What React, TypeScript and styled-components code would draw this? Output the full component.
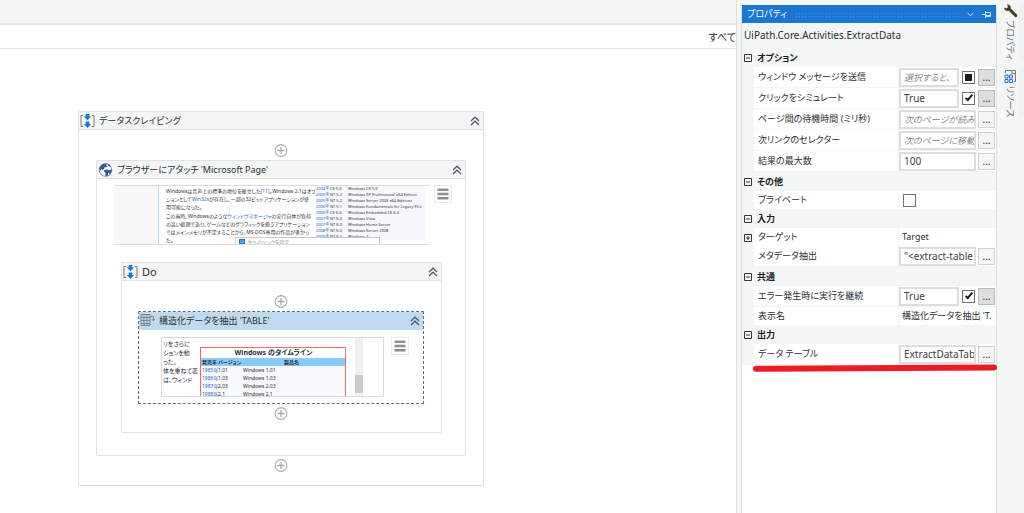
import React from "react";
import styled, { createGlobalStyle, css } from "styled-components";

const ui = `"Noto Sans", "Noto Sans CJK JP", sans-serif`;

const Global = createGlobalStyle`
  *, *::before, *::after { box-sizing: border-box; }
  body {
    margin: 0;
    background: #f4f6f5;
    color: #2b2f33;
    font-family: ${ui};
    font-size: 10px;
    font-feature-settings: "palt";
  }
  button, input { font: inherit; color: inherit; font-feature-settings: inherit; margin: 0; }
`;

/* ---------- frame ---------- */

const Shell = styled.div`
  display: flex;
  min-height: 100vh;
`;

const Designer = styled.main`
  flex: 1;
  min-width: 0;
  display: flex;
  flex-direction: column;
  border-right: 1px solid #dcdfdf;
`;

const Ribbon = styled.div`
  height: 25px;
  border-bottom: 2px solid #e3e5e7;
`;

const Breadcrumb = styled.nav`
  height: 24px;
  display: flex;
  align-items: center;
  justify-content: flex-end;
  background: #fff;
  border-bottom: 1px solid #e0e2e3;
  overflow: hidden;
`;

const PlainButton = styled.button`
  display: inline-flex;
  align-items: center;
  justify-content: center;
  padding: 0;
  border: 0;
  background: none;
  line-height: 16px;
`;

const Canvas = styled.div`
  flex: 1;
  display: flex;
  align-items: flex-start;
  padding: 62px 0 24px 78px;
  background: #fff;
`;

/* ---------- activities ---------- */

const Card = styled.section<{ $selected?: boolean }>`
  flex: none;
  background: #fff;
  border: 1px solid #dfe1e2;
  border-radius: 1px;
  ${(p) => p.$selected && css`border: 1px dashed #4f7187;`}
`;

const CardHeader = styled.header<{ $selected?: boolean }>`
  height: 18px;
  display: flex;
  align-items: center;
  gap: 4px;
  padding: 0 3px 0 1px;
  background: ${(p) => (p.$selected ? "#bfdaef" : "#f4f6f5")};
  border-bottom: 1px solid ${(p) => (p.$selected ? "#bfdaef" : "#dfe1e2")};
`;

const CardTitle = styled.h2<{ $size?: number }>`
  flex: 1;
  margin: 0;
  font-size: ${(p) => p.$size ?? 9}px;
  font-weight: 400;
  line-height: 16px;
  white-space: nowrap;
`;

const CardBody = styled.div<{ $pad: string; $gap?: number }>`
  display: flex;
  flex-direction: column;
  align-items: center;
  gap: ${(p) => p.$gap ?? 3}px;
  padding: ${(p) => p.$pad};
`;

const Preview = styled.div<{ $wide?: boolean }>`
  align-self: stretch;
  display: flex;
  align-items: flex-start;
  justify-content: space-between;
  gap: 7px;
  ${(p) => p.$wide && css`gap: 4px; margin: 0 -10px 0 -7px;`}
`;

const MenuButton = styled(PlainButton)`
  width: 18px;
  height: 18px;
  flex: none;
  border: 1px solid #e6e8f2;
  background: #fff;
`;

const Collapse = () => (
  <PlainButton aria-label="折りたたむ">
    <svg width="10" height="10" viewBox="0 0 10 10" fill="none" stroke="#4d5870" strokeWidth="1.2">
      <path d="M1 5 5 1.2 9 5M1 9 5 5.2 9 9" />
    </svg>
  </PlainButton>
);

const AddActivity = () => (
  <PlainButton aria-label="アクティビティを追加">
    <svg width="14" height="13" viewBox="0 0 14 13" fill="none" stroke="#a9abad" strokeWidth="1.1">
      <circle cx="7" cy="6.5" r="5.9" />
      <path d="M7 3v7M3.5 6.5h7" strokeWidth="1.3" />
    </svg>
  </PlainButton>
);

const Menu = () => (
  <MenuButton aria-label="オプション">
    <svg width="12" height="12" viewBox="0 0 12 12" fill="#8f8f8f">
      <path d="M.5.5h11V3H.5zM.5 4.800h11v2.500H.5zM.5 9h11v2.500H.5z" />
    </svg>
  </MenuButton>
);

const SequenceIcon = () => (
  <svg width="15" height="14" viewBox="0 0 15 14">
    <path d="M3 1.500H1v11h2M12 1.500h2v11h-2" fill="none" stroke="#7a7d80" />
    <path d="M5.700 0h3.600v2.500H11L7.500 6.200 4 2.500h1.700zM5.700 7.500h3.600V10H11l-3.500 4L4 10h1.700z" fill="#1878d6" />
  </svg>
);

const GlobeIcon = () => (
  <svg width="15" height="14" viewBox="0 0 15 14">
    <circle cx="7.5" cy="7" r="6.3" fill="#fff" stroke="#7088b8" strokeWidth=".9" />
    <path
      d="M1.300 6.500C1.300 3.500 3.500 1.200 6 .7l3 .1L8 2l1.500 1L8 4.500 6.500 4.200 6 6 4.500 7 3.500 6.200 2.500 7.500zM9.500 1l2 .8 1.500 2-1.500-.3L10 2.500zM5.500 7.500 8 6.500l3 .5 2.800-.5c0 2-1 3.800-2.300 4.800L10.500 9.500 9.500 13l-2 .3L7.500 10z"
      fill="#345a9c"
    />
  </svg>
);

const TableIcon = () => (
  <svg width="15" height="13" viewBox="0 0 15 13" fill="none" stroke="#7c858d">
    <path d="M1 .5h9v11H1zM1 3.500h9M1 6.500h9M1 9.500h9M4 .5v11M7 .5v11M10 2.500h3.500v4M11.800 5l1.700 2 1.300-2" />
  </svg>
);

/* ---------- captured page previews ---------- */

const Shot = styled.div<{ $width: number; $framed?: boolean }>`
  width: ${(p) => p.$width}px;
  height: 60px;
  flex: none;
  display: flex;
  position: relative;
  overflow: hidden;
  background: #fff;
  border: solid #d9dcde;
  border-width: ${(p) => (p.$framed ? "1px" : "1px 0")};
`;

const ShotMargin = styled.div`
  width: 45px;
  flex: none;
  background: #f7f7f8;
  border-right: 1px solid #b9dcf5;
`;

const Article = styled.div`
  flex: 1;
  min-width: 0;
  padding: 1px 0 0 7px;
  font-size: 5px;
  line-height: 8px;
  white-space: nowrap;
  color: #333;
`;

const Paragraph = styled.p`
  margin: 0 0 1px;
`;

const ShotLink = styled.a`
  color: #2f67c8;
  text-decoration: none;
`;

const Releases = styled.table`
  flex: none;
  width: 110px;
  margin-right: 5px;
  align-self: flex-start;
  table-layout: fixed;
  border-collapse: collapse;
  background: #f6f7fa;
  font-size: 4px;
  line-height: 6px;
  white-space: nowrap;
  color: #333;
  td { padding: 0 0 0 1px; height: 6px; }
`;

const LinkHint = styled.div`
  position: absolute;
  left: 121px;
  top: 51px;
  width: 145px;
  height: 12px;
  display: flex;
  align-items: center;
  gap: 2px;
  padding: 0 3px 2px;
  border: 1px solid #c9c9c9;
  background: #fff;
  font-size: 5px;
  line-height: 8px;
  color: #999;
`;

const HintBadge = styled.span`
  width: 6px;
  height: 6px;
  background: #1b76d4;
  color: #fff;
  font-size: 4px;
  line-height: 6px;
  text-align: center;
`;

const SideText = styled.div`
  width: 38px;
  flex: none;
  padding: 2px 0 0 1px;
  font-size: 6px;
  line-height: 9px;
  white-space: nowrap;
  overflow: hidden;
`;

const Timeline = styled.table`
  width: 146px;
  flex: none;
  margin-top: 9px;
  align-self: flex-start;
  table-layout: fixed;
  border-spacing: 0;
  border: solid #fb6467;
  border-width: 1px 1px 0;
  background: #f8f9fb;
  font-size: 5px;
  line-height: 8px;
  white-space: nowrap;
  th, td { padding: 0 0 0 1px; text-align: left; height: 8px; }
`;

const TimelineTitle = styled.th`
  && {
    height: 10px;
    font-size: 7px;
    line-height: 10px;
    text-align: center;
    background: #fff;
  }
`;

const TimelineHead = styled.tr`
  background: #87cdfb;
  th:last-child { padding-left: 42px; }
`;

const ScrollTrack = styled.div`
  width: 8px;
  margin-left: 9px;
  padding-top: 37px;
  background: #f0f0f0;
  &::before { content: ""; display: block; height: 18px; background: #cbcbcb; }
`;

const releases = [
  ["2004年", "CE 5.0", "Windows CE 5.0"],
  ["2005年", "NT 5.2", "Windows XP Professional x64 Edition"],
  ["2005年", "NT 5.2", "Windows Server 2003 x64 Editions"],
  ["2006年", "NT 5.1", "Windows Fundamentals for Legacy PCs"],
  ["2006年", "CE 6.0", "Windows Embedded CE 6.0"],
  ["2007年", "NT 6.0", "Windows Vista"],
  ["2007年", "NT 6.0", "Windows Home Server"],
  ["2008年", "NT 6.0", "Windows Server 2008"],
  ["2009年", "NT 6.1", "Windows 7"],
];

const timeline = [
  ["1985年", "1.01", "Windows 1.01"],
  ["1986年", "1.03", "Windows 1.03"],
  ["1987年", "2.03", "Windows 2.03"],
  ["1988年", "2.1", "Windows 2.1"],
];

const PagePreview = () => (
  <Shot $width={316}>
    <ShotMargin />
    <Article>
      <Paragraph>
        Windowsは音声上の標準の地位を確立した<ShotLink href="#">[11]</ShotLink>。Windows 2.1はオプ<br />
        ションとして<ShotLink href="#">Win32s</ShotLink>が存在し、一部の32ビットアプリケーションが使<br />
        用可能になった。
      </Paragraph>
      <Paragraph>
        この当時、Windowsのような<ShotLink href="#">ウィンドウマネージャ</ShotLink>の実行自体が負荷<br />
        の高い処理であり、ゲームなどのグラフィックを扱うアプリケーション<br />
        ではメインメモリが不足することから、MS-DOS専用の作品が多かっ<br />
        た。
      </Paragraph>
    </Article>
    <Releases>
      <colgroup>
        <col width="14" /><col width="18" /><col />
      </colgroup>
      <tbody>
        {releases.map(([year, version, name]) => (
          <tr key={name}>
            <td><ShotLink href="#">{year}</ShotLink></td>
            <td>{version}</td>
            <td>{name}</td>
          </tr>
        ))}
      </tbody>
    </Releases>
    <LinkHint><HintBadge>Ui</HintBadge>次へのリンクを指定</LinkHint>
  </Shot>
);

const TablePreview = () => (
  <Shot $width={223} $framed>
    <SideText>
      <ShotLink href="#">リ</ShotLink>をさらに<br />ションを動<br />った。<br />体を重ねて表<br />は、ウィンド
    </SideText>
    <Timeline>
      <colgroup>
        <col width="16" /><col width="25" /><col />
      </colgroup>
      <thead>
        <tr><TimelineTitle colSpan={3}>Windows のタイムライン</TimelineTitle></tr>
        <TimelineHead><th>発売年</th><th>バージョン</th><th>製品名</th></TimelineHead>
      </thead>
      <tbody>
        {timeline.map(([year, version, name]) => (
          <tr key={name}>
            <td><ShotLink href="#">{year}</ShotLink></td>
            <td>{version}</td>
            <td>{name}</td>
          </tr>
        ))}
      </tbody>
    </Timeline>
    <ScrollTrack />
  </Shot>
);

/* ---------- properties panel ---------- */

const Panel = styled.aside`
  width: 256px;
  flex: none;
  display: flex;
  flex-direction: column;
  margin: 5px 0 0 4px;
  border: solid #dfe1e2;
  border-width: 0 1px;
  background: #fff;
`;

const PanelHeader = styled.header`
  height: 18px;
  display: flex;
  align-items: center;
  gap: 8px;
  padding: 0 5px;
  background: #1b76d4;
  color: #fff;
`;

const PanelTitle = styled.h1`
  margin: 0;
  font-size: 9px;
  font-weight: 400;
  line-height: 16px;
`;

const Grip = styled.div`
  flex: 1;
  height: 5px;
  background: radial-gradient(circle, #4a94de 0 0.7px, transparent 1px) 0 0 / 3px 3px;
`;

const TypeName = styled.div`
  height: 25px;
  padding-left: 2px;
  background: #f4f6f5;
  line-height: 25px;
`;

const Grid = styled.div`
  background: #f4f6f5;
`;

const Category = styled.h3`
  height: 19px;
  display: flex;
  align-items: center;
  gap: 5px;
  margin: 0;
  padding-left: 2px;
  font-size: 9px;
  font-weight: 700;
  line-height: 16px;
  color: #1e2124;
`;

const Expander = styled(PlainButton)`
  width: 8px;
  height: 8px;
`;

const Row = styled.div<{ $short?: boolean }>`
  display: grid;
  grid-template-columns: 12px 144px minmax(0, 1fr);
  align-items: center;
  height: ${(p) => (p.$short ? 18 : 21)}px;
`;

const Gutter = styled.div`
  padding-left: 2px;
  display: flex;
`;

const Name = styled.label`
  align-self: stretch;
  display: flex;
  align-items: center;
  padding-left: 4px;
  background: #fff;
  border-bottom: 1px solid #f4f6f5;
  font-size: 9px;
  line-height: 18px;
  white-space: nowrap;
`;

const Value = styled.div`
  align-self: stretch;
  min-width: 0;
  display: flex;
  align-items: center;
  gap: 2px;
  padding-right: 1px;
  background: #fff;
  border-left: 1px solid #f4f6f5;
  border-bottom: 1px solid #f4f6f5;
`;

const PlainValue = styled.span`
  padding-left: 3px;
  font-size: 9px;
  line-height: 18px;
  white-space: nowrap;
`;

const Field = styled.input`
  flex: 1;
  width: 0;
  min-width: 0;
  height: 19px;
  padding: 0 0 0 3px;
  border: 2px solid #dcdddf;
  background: #fff;
  color: #3c4146;
  outline: 0;
  &::placeholder { color: #85888b; font-size: 9px; font-style: italic; opacity: 1; }
`;

const Check = styled.input<{ $mixed?: boolean; $alone?: boolean }>`
  appearance: none;
  width: 13px;
  height: 13px;
  flex: none;
  display: grid;
  place-items: center;
  border: 1px solid #6f7275;
  background: #fff;
  && { margin: 0 1px 0 ${(p) => (p.$alone ? 4 : 1)}px; }
  &:checked::after {
    content: "";
    width: 4px;
    height: 8px;
    margin-bottom: 2px;
    border: solid #1d1d1d;
    border-width: 0 2px 2px 0;
    transform: rotate(40deg);
  }
  ${(p) => p.$mixed && css`&::after { content: ""; width: 7px; height: 7px; background: #1d1d1d; }`}
`;

const More = styled.button<{ $dark?: boolean }>`
  width: 17px;
  height: 17px;
  flex: none;
  padding: 0;
  border: 1px solid ${(p) => (p.$dark ? "#b9b9b9" : "#cfd1d2")};
  background: ${(p) => (p.$dark ? "#dedede" : "#f4f6f5")};
  line-height: 14px;
`;

const RedMark = styled.svg`
  display: block;
  align-self: stretch;
  height: 8px;
  margin: -1px -2px 0 10px;
  z-index: 1;
`;

type Prop = {
  name: string;
  value?: string;
  hint?: string;
  check?: "on" | "off" | "mixed";
  plain?: boolean;
  expandable?: boolean;
};

const groups: { title: string; props: Prop[] }[] = [
  {
    title: "オプション",
    props: [
      { name: "ウィンドウ メッセージを送信", hint: "選択すると、", check: "mixed" },
      { name: "クリックをシミュレート", value: "True", check: "on" },
      { name: "ページ間の待機時間 (ミリ秒)", hint: "次のページが読み" },
      { name: "次リンクのセレクター", hint: "次のページに移動" },
      { name: "結果の最大数", value: "100" },
    ],
  },
  { title: "その他", props: [{ name: "プライベート", check: "off", plain: true }] },
  {
    title: "入力",
    props: [
      { name: "ターゲット", value: "Target", plain: true, expandable: true },
      { name: "メタデータ抽出", value: "\"<extract-table" },
    ],
  },
  {
    title: "共通",
    props: [
      { name: "エラー発生時に実行を継続", value: "True", check: "on" },
      { name: "表示名", value: "構造化データを抽出 'T.", plain: true },
    ],
  },
  { title: "出力", props: [{ name: "データ テーブル", value: "ExtractDataTabl" }] },
];

const Toggle = ({ plus }: { plus?: boolean }) => (
  <Expander aria-label={plus ? "展開" : "折りたたむ"}>
    <svg width="8" height="8" viewBox="0 0 8 8" fill="none" stroke="#33373b">
      <path d={plus ? "M.5.5h7v7h-7zM2 4h4M4 2v4" : "M.5.5h7v7h-7zM2 4h4"} />
    </svg>
  </Expander>
);

const PropertyRow = ({ p }: { p: Prop }) => {
  const id = React.useId();
  return (
    <Row $short={p.plain}>
      <Gutter>{p.expandable && <Toggle plus />}</Gutter>
      <Name htmlFor={p.plain && !p.check ? undefined : id}>{p.name}</Name>
      <Value>
        {p.plain && p.check && <Check id={id} type="checkbox" $alone />}
        {p.plain && p.value && <PlainValue>{p.value}</PlainValue>}
        {!p.plain && (
          <>
            <Field id={id} defaultValue={p.value} placeholder={p.hint} />
            {p.check && (
              <Check
                type="checkbox"
                aria-label={p.name}
                defaultChecked={p.check === "on"}
                $mixed={p.check === "mixed"}
              />
            )}
            <More aria-label={`${p.name} を編集`} $dark={!!p.check}>...</More>
          </>
        )}
      </Value>
    </Row>
  );
};

/* ---------- docked tabs ---------- */

const Dock = styled.nav`
  width: 27px;
  flex: none;
  display: flex;
  flex-direction: column;
  gap: 9px;
  padding: 4px 0 0 6px;
`;

const DockTab = styled.button`
  display: flex;
  flex-direction: column;
  align-items: flex-start;
  gap: 2px;
  padding: 0;
  border: 0;
  border-right: 5px solid #eff0f2;
  background: none;
  color: #6d7176;
`;

const DockLabel = styled.span`
  writing-mode: vertical-rl;
  text-orientation: sideways;
  font-size: 9px;
  line-height: 14px;
`;

export default function App() {
  return (
    <>
      <Global />
      <Shell>
        <Designer>
          <Ribbon />
          <Breadcrumb>
            <PlainButton>すべて</PlainButton>
          </Breadcrumb>
          <Canvas>
            <Card>
              <CardHeader>
                <SequenceIcon />
                <CardTitle>データスクレイピング</CardTitle>
                <Collapse />
              </CardHeader>
              <CardBody $pad="14px 17px 13px">
                <AddActivity />
                <Card>
                  <CardHeader>
                    <GlobeIcon />
                    <CardTitle>ブラウザーにアタッチ 'Microsoft Page'</CardTitle>
                    <Collapse />
                  </CardHeader>
                  <CardBody $pad="6px 23px 22px 24px" $gap={17}>
                    <Preview $wide>
                      <PagePreview />
                      <Menu />
                    </Preview>
                    <Card>
                      <CardHeader>
                        <SequenceIcon />
                        <CardTitle $size={11}>Do</CardTitle>
                        <Collapse />
                      </CardHeader>
                      <CardBody $pad="14px 17px 12px 16px">
                        <AddActivity />
                        <Card $selected>
                          <CardHeader $selected>
                            <TableIcon />
                            <CardTitle>構造化データを抽出 'TABLE'</CardTitle>
                            <Collapse />
                          </CardHeader>
                          <CardBody $pad="7px 14px 6px 22px">
                            <Preview>
                              <TablePreview />
                              <Menu />
                            </Preview>
                          </CardBody>
                        </Card>
                        <AddActivity />
                      </CardBody>
                    </Card>
                  </CardBody>
                </Card>
                <AddActivity />
              </CardBody>
            </Card>
          </Canvas>
        </Designer>

        <Panel>
          <PanelHeader>
            <PanelTitle>プロパティ</PanelTitle>
            <Grip />
            <PlainButton aria-label="メニュー">
              <svg width="7" height="5" viewBox="0 0 7 5" fill="none" stroke="#d5e6f8">
                <path d="m.5.800 3 3 3-3" />
              </svg>
            </PlainButton>
            <PlainButton aria-label="ピン留め">
              <svg width="9" height="7" viewBox="0 0 9 7" fill="none" stroke="#d5e6f8">
                <path d="M0 3.500h3M3.500 0v7M3.500 1.500h5v4h-5M3.500 4.500h5" />
              </svg>
            </PlainButton>
          </PanelHeader>
          <TypeName>UiPath.Core.Activities.ExtractData</TypeName>
          <Grid>
            {groups.map((g) => (
              <React.Fragment key={g.title}>
                <Category><Toggle />{g.title}</Category>
                {g.props.map((p) => <PropertyRow key={p.name} p={p} />)}
              </React.Fragment>
            ))}
          </Grid>
          <RedMark viewBox="0 0 246 8" preserveAspectRatio="none" aria-hidden="true">
            <path d="M4 4.800C60 4.200 150 3.800 242 3.500" fill="none" stroke="#ed1c24" strokeWidth="6" strokeLinecap="round" />
          </RedMark>
        </Panel>

        <Dock>
          <DockTab>
            <svg width="15" height="14" viewBox="0 0 15 14">
              <path d="M1 3.500 3.500 4.500 5 3 4 .5C6.500.2 8.300 2 7.800 4.500L14 10.500C15 12 13.500 13.800 12 13L5.800 6.800C3.500 7.500 1.200 6 1 3.500z" fill="#4a3d2c" />
            </svg>
            <DockLabel>プロパティ</DockLabel>
          </DockTab>
          <DockTab>
            <svg width="15" height="15" viewBox="0 0 15 15" fill="none">
              <path d="M2.500 4V1.500h10v11H11M9 1.500v3h3.500" stroke="#74797e" />
              <path d="M2 6h3v3H2zM6.500 6h3v3h-3zM2 10.500h3v3H2zM6.500 10.500h3v3h-3z" stroke="#1b76d4" />
            </svg>
            <DockLabel>リソース</DockLabel>
          </DockTab>
        </Dock>
      </Shell>
    </>
  );
}
